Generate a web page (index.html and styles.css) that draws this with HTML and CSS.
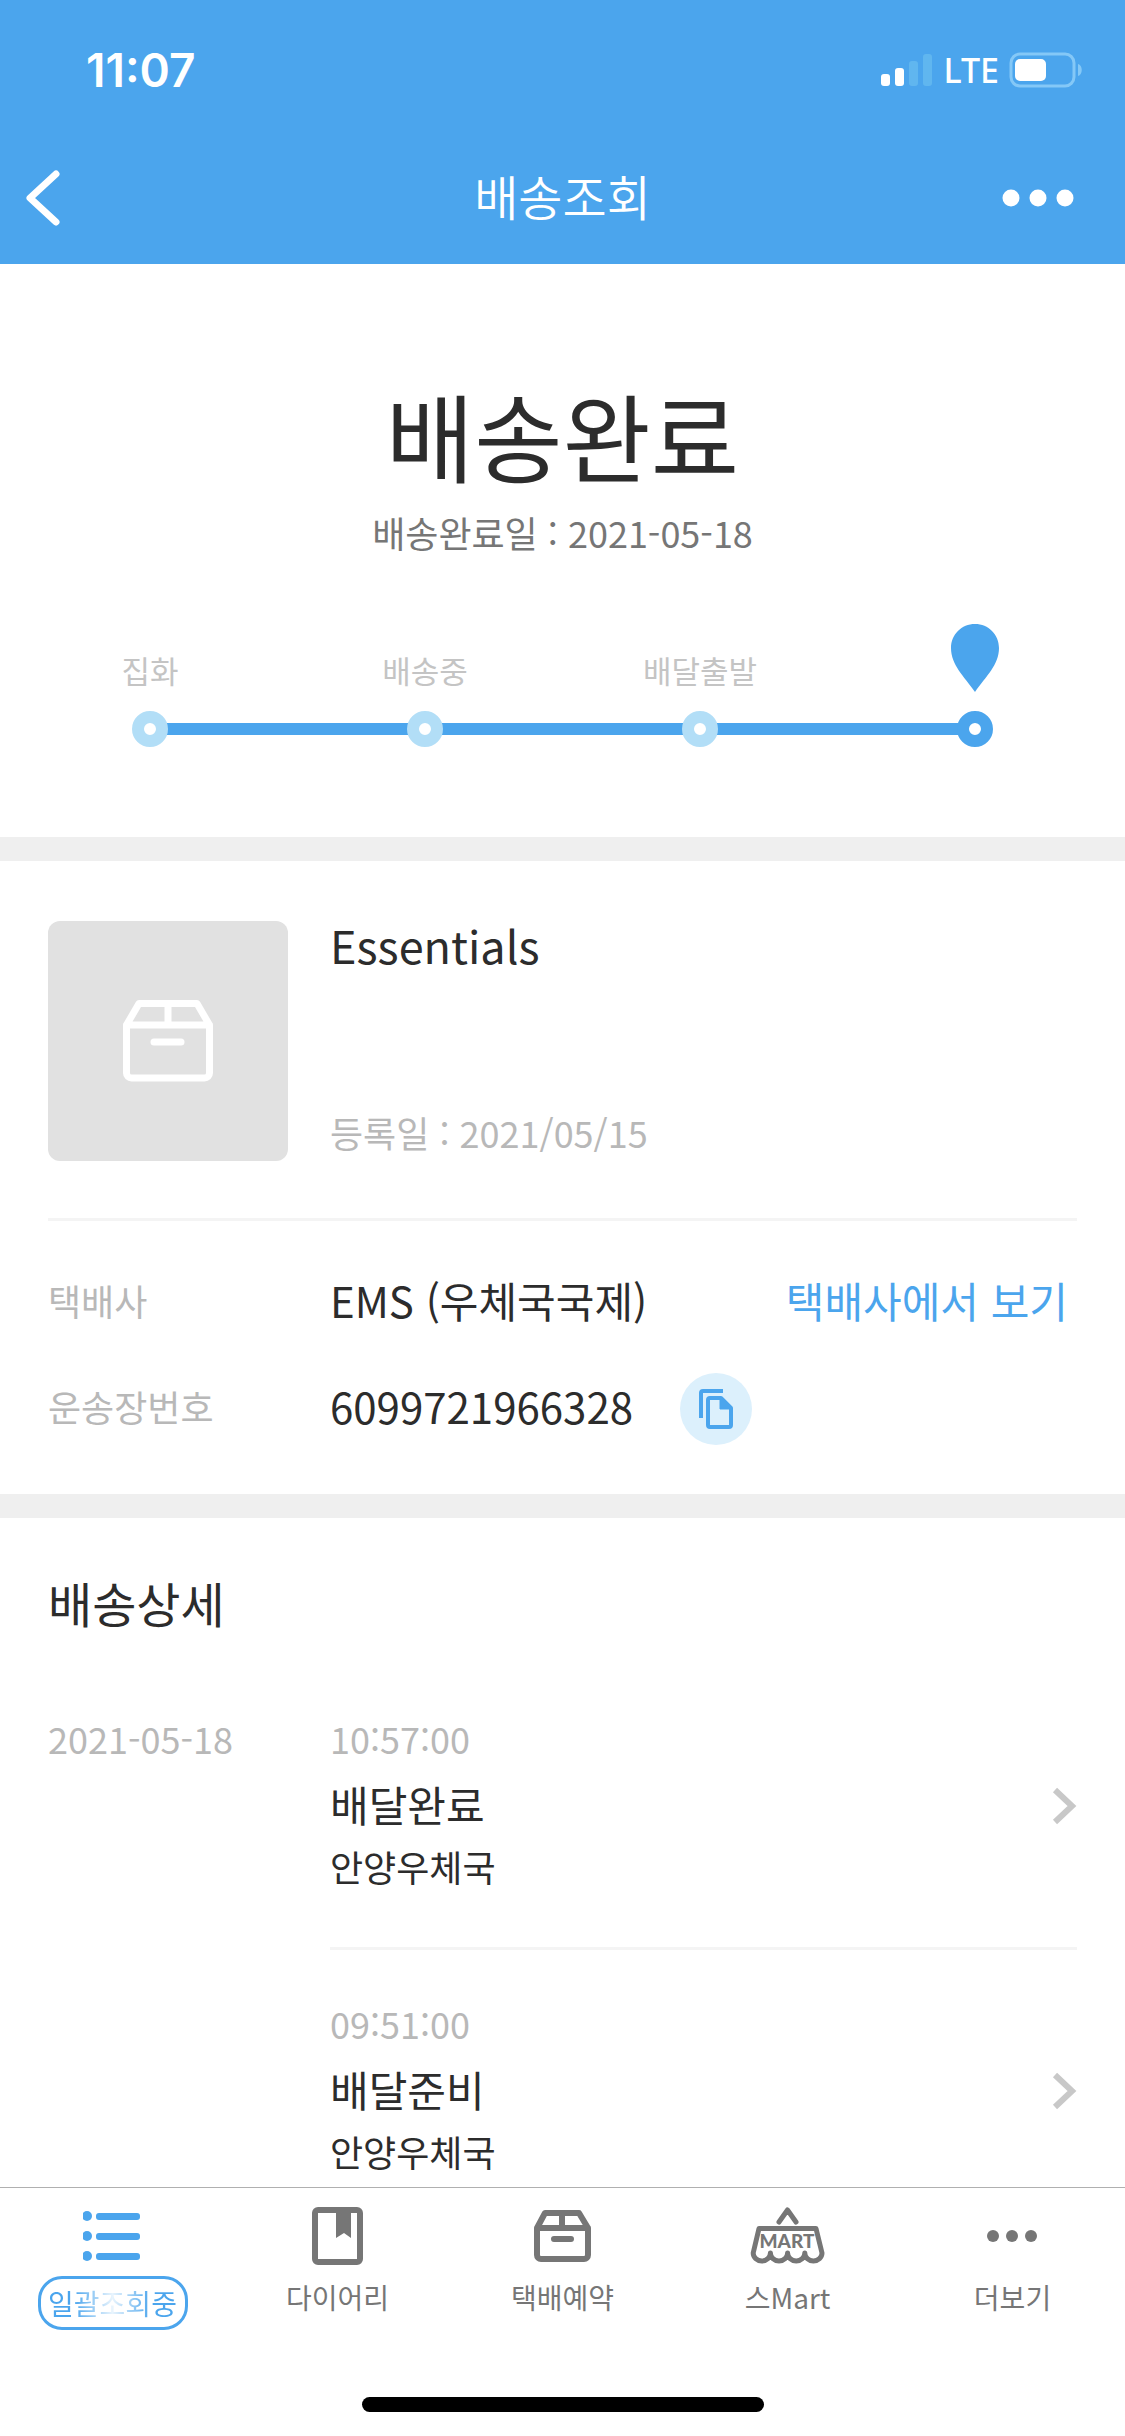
FILE: index.html
```html
<!DOCTYPE html>
<html lang="ko">
<head>
<meta charset="utf-8">
<meta name="viewport" content="width=device-width, initial-scale=1">
<title>배송조회</title>
<link rel="stylesheet" href="styles.css">
</head>
<body>
<div class="app">
  <header class="header">
    <div class="status">
      <span class="clock">11:07</span>
      <div class="indicators">
        <svg width="52" height="33" viewBox="0 0 52 33" fill="#fff" aria-hidden="true">
          <rect x="0" y="20" width="9" height="12" rx="3"/>
          <rect x="14" y="14" width="9" height="18" rx="3"/>
          <rect x="28" y="7" width="9" height="25" rx="3" fill="#60b6ef"/>
          <rect x="42" y="0" width="9" height="32" rx="3" fill="#60b6ef"/>
        </svg>
        <span class="network">LTE</span>
        <svg width="74" height="36" viewBox="0 0 74 36" aria-hidden="true">
          <rect x="2" y="2" width="63" height="32" rx="9" fill="none" stroke="#84c8f7" stroke-width="3"/>
          <rect x="6" y="7" width="31" height="22" rx="5" fill="#fff"/>
          <path d="M69 12c5 1 5 11 0 12z" fill="#84c8f7"/>
        </svg>
      </div>
    </div>
    <div class="navbar">
      <button class="icon-button" type="button" aria-label="뒤로">
        <svg width="36" height="58" viewBox="0 0 36 58" fill="none" stroke="#fff" stroke-width="7" stroke-linecap="round" stroke-linejoin="round" aria-hidden="true"><path d="M30 5 4 29l26 24"/></svg>
      </button>
      <h1 class="nav-title">배송조회</h1>
      <button class="icon-button icon-button-end" type="button" aria-label="메뉴">
        <svg width="72" height="18" viewBox="0 0 72 18" fill="#fff" aria-hidden="true"><circle cx="9" cy="9" r="8.500"/><circle cx="36" cy="9" r="8.500"/><circle cx="63" cy="9" r="8.500"/></svg>
      </button>
    </div>
  </header>

  <main class="content">
    <section class="summary">
      <h2 class="summary-title">배송완료</h2>
      <p class="summary-date">배송완료일 : 2021-05-18</p>
      <ol class="steps">
        <li class="step"><span class="step-label">집화</span><span class="dot"></span></li>
        <li class="step"><span class="step-label">배송중</span><span class="dot"></span></li>
        <li class="step"><span class="step-label">배달출발</span><span class="dot"></span></li>
        <li class="step step-current">
          <svg class="pin" width="48" height="68" viewBox="0 0 48 68" fill="#4ba5ed" role="img" aria-label="배송완료"><path d="M24 0C10.500 0 0 10.500 0 24c0 17 13 28 24 44 11-16 24-27 24-44C48 10.500 37.500 0 24 0z"/></svg>
          <span class="dot"></span>
        </li>
      </ol>
    </section>

    <section class="parcel">
      <div class="product">
        <div class="thumb">
          <svg width="90" height="82" viewBox="0 0 90 82" fill="none" stroke="#fff" stroke-width="7" stroke-linecap="round" stroke-linejoin="round" aria-hidden="true"><path d="M3.500 25 16 3.500h58L86.500 25v48a5 5 0 0 1-5 5h-73a5 5 0 0 1-5-5zM3.500 25h83M45 4v20M31 42h27"/></svg>
        </div>
        <div class="product-text">
          <h2 class="product-name">Essentials</h2>
          <p class="muted">등록일 : 2021/05/15</p>
        </div>
      </div>
      <dl class="facts">
        <div class="fact">
          <dt class="fact-label muted">택배사</dt>
          <dd class="fact-value">EMS (우체국국제)</dd>
          <dd class="fact-link"><a href="#carrier">택배사에서 보기</a></dd>
        </div>
        <div class="fact">
          <dt class="fact-label muted">운송장번호</dt>
          <dd class="fact-value">6099721966328</dd>
          <dd class="fact-copy">
            <button class="copy" type="button" aria-label="복사">
              <svg width="36" height="40" viewBox="0 0 36 40" fill="none" stroke="#4ba5ed" stroke-width="4" stroke-linejoin="round" aria-hidden="true"><path d="M3 29V4q0-2 2-2h20M12 9h11l10 10v17q0 2-2 2H12q-2 0-2-2V11q0-2 2-2z"/><path d="M22 9v11h11z" fill="#4ba5ed" stroke-width="1"/></svg>
            </button>
          </dd>
        </div>
      </dl>
    </section>

    <section class="detail">
      <h2 class="detail-title">배송상세</h2>
      <div class="day">
        <p class="muted">2021-05-18</p>
        <ul class="events">
          <li><a class="event" href="#event-1">
            <span class="event-text"><span class="muted">10:57:00</span><span class="event-name">배달완료</span><span>안양우체국</span></span>
            <svg class="chevron" width="26" height="38" viewBox="0 0 26 38" fill="none" stroke="#c8c8c8" stroke-width="6" aria-hidden="true"><path d="m4 3 17 16L4 35"/></svg>
          </a></li>
          <li><a class="event" href="#event-2">
            <span class="event-text"><span class="muted">09:51:00</span><span class="event-name">배달준비</span><span>안양우체국</span></span>
            <svg class="chevron" width="26" height="38" viewBox="0 0 26 38" fill="none" stroke="#c8c8c8" stroke-width="6" aria-hidden="true"><path d="m4 3 17 16L4 35"/></svg>
          </a></li>
        </ul>
      </div>
    </section>
  </main>

  <footer class="footer">
    <nav class="tabs">
      <a class="tab tab-active" href="#list">
        <svg width="60" height="60" viewBox="0 0 60 60" fill="#4ba5ed" aria-hidden="true"><circle cx="4" cy="9" r="5"/><circle cx="4" cy="29" r="5"/><circle cx="4" cy="49" r="5"/><rect x="13" y="6" width="44" height="7" rx="3"/><rect x="13" y="26" width="44" height="7" rx="3"/><rect x="13" y="46" width="44" height="7" rx="3"/></svg>
        <span class="pill"><span class="pill-text">일괄조회중</span></span>
      </a>
      <a class="tab" href="#diary">
        <svg width="60" height="60" viewBox="0 0 60 60" fill="none" stroke="#767676" stroke-width="6" aria-hidden="true"><rect x="7" y="3" width="45" height="52" rx="3"/><path d="M28 3h15v28l-7-5-8 5z" fill="#767676" stroke="none"/></svg>
        <span>다이어리</span>
      </a>
      <a class="tab" href="#reserve">
        <svg width="60" height="60" viewBox="0 0 60 60" fill="none" stroke="#767676" stroke-width="6" stroke-linecap="round" stroke-linejoin="round" aria-hidden="true"><path d="M4 21 12 6h34l9 15v27a4 4 0 0 1-4 4H8a4 4 0 0 1-4-4zM4 21h51M29 7v13M21 32h17"/></svg>
        <span>택배예약</span>
      </a>
      <a class="tab" href="#mart">
        <svg width="76" height="60" viewBox="0 0 76 60" fill="none" stroke="#767676" stroke-width="5" stroke-linecap="round" stroke-linejoin="round" aria-hidden="true"><path d="m29 15 8.500-12L46 15M9 21.500h57l6 24.500a8.600 8 0 0 1-17.200 0 8.600 8 0 0 1-17.200 0 8.600 8 0 0 1-17.200 0 8.600 8 0 0 1-17.200 0z"/><text class="mart-text" x="37" y="41" text-anchor="middle">MART</text></svg>
        <span>스Mart</span>
      </a>
      <a class="tab" href="#more">
        <svg width="60" height="60" viewBox="0 0 60 60" fill="#767676" aria-hidden="true"><circle cx="10" cy="29" r="6"/><circle cx="29" cy="29" r="6"/><circle cx="48" cy="29" r="6"/></svg>
        <span>더보기</span>
      </a>
    </nav>
    <div class="home-bar"></div>
  </footer>
</div>
</body>
</html>
```

FILE: styles.css
```css
* {
  box-sizing: border-box;
}

body,
h1,
h2,
p,
ol,
ul,
dl,
dd {
  margin: 0;
  padding: 0;
}

body {
  background: #fff;
  color: #2c2c2c;
  font-family: "Noto Sans CJK KR", sans-serif;
  font-size: 36px;
  font-weight: 400;
  line-height: 48px;
}

h1,
h2 {
  font-weight: 400;
}

ol,
ul {
  list-style: none;
}

a {
  color: inherit;
  text-decoration: none;
}

button {
  border: 0;
  padding: 0;
  background: none;
  font: inherit;
}

svg {
  display: block;
  flex: none;
}

.app {
  display: flex;
  flex-direction: column;
  min-height: 100vh;
}

/* Header */

.header {
  background: #4ba5ed;
  color: #fff;
}

.status {
  display: flex;
  align-items: center;
  justify-content: space-between;
  height: 132px;
  padding: 8px 42px 0 86px;
}

.clock {
  font-family: Inter, sans-serif;
  font-size: 46px;
  font-weight: 600;
}

.indicators {
  display: flex;
  align-items: center;
  gap: 10px;
}

.network {
  font-family: "Noto Sans", sans-serif;
  font-size: 34px;
  font-weight: 500;
}

.navbar {
  display: grid;
  grid-template-columns: 1fr auto 1fr;
  align-items: center;
  height: 132px;
  padding: 0 26px;
}

.icon-button-end {
  justify-self: end;
  margin-right: 25px;
}

.nav-title {
  padding-bottom: 6px;
  font-size: 48px;
  font-weight: 350;
}

/* Delivery state */

.summary {
  padding: 110px 126px 90px;
  text-align: center;
}

.summary-title {
  font-size: 96px;
  line-height: 120px;
}

.summary-date {
  margin-top: 14px;
  color: #767676;
}

.steps {
  display: flex;
  justify-content: space-between;
  margin-top: 68px;
  background: linear-gradient(#4ba5ed, #4ba5ed) center bottom 12px / calc(100% - 48px) 12px no-repeat;
}

.step {
  display: flex;
  flex-direction: column;
  align-items: center;
  justify-content: space-between;
  width: 48px;
  height: 123px;
}

.step-label {
  padding-top: 22px;
  color: #c4c4c4;
  font-size: 31px;
  white-space: nowrap;
}

.dot {
  width: 36px;
  height: 36px;
  border: 12px solid #b2def7;
  border-radius: 50%;
  background: #fff;
}

.step-current .dot {
  border-color: #4ba5ed;
}

/* Parcel */

.parcel,
.detail {
  border-top: 24px solid #efefef;
  padding: 0 48px;
}

.product {
  display: flex;
  gap: 42px;
  padding: 60px 0 57px;
  border-bottom: 3px solid #f4f4f4;
}

.thumb {
  display: grid;
  place-items: center;
  width: 240px;
  height: 240px;
  border-radius: 12px;
  background: #e1e1e1;
}

.product-text {
  display: flex;
  flex-direction: column;
  justify-content: space-between;
  padding-bottom: 5px;
}

.product-name {
  font-size: 45px;
  line-height: 48px;
}

.muted {
  color: #b8b8b8;
}

.facts {
  padding: 46px 0 49px;
}

.fact {
  display: grid;
  grid-template-columns: 282px auto 1fr;
  align-items: center;
  height: 72px;
}

.fact + .fact {
  margin-top: 34px;
}

.fact-label,
.fact-value,
.fact-link {
  padding-bottom: 7px;
}

.fact-value,
.fact-link {
  font-size: 42px;
}

.fact-link {
  justify-self: end;
  padding-right: 9px;
  color: #4ba5ed;
}

.fact-copy {
  padding-left: 47px;
}

.copy {
  display: grid;
  place-items: center;
  width: 72px;
  height: 72px;
  border-radius: 50%;
  background: #dcf0fc;
}

/* Tracking history */

.detail {
  flex: 1;
}

.detail-title {
  padding: 60px 0 88px;
  font-size: 48px;
}

.day {
  display: grid;
  grid-template-columns: 282px 1fr;
}

.event {
  display: flex;
  align-items: center;
  justify-content: space-between;
  padding-bottom: 57px;
}

li + li .event {
  padding-top: 49px;
  border-top: 3px solid #f4f4f4;
}

li:last-child .event {
  padding-bottom: 0;
}

.event-text {
  display: flex;
  flex-direction: column;
}

.event-name {
  padding: 8px 0 4px;
  font-size: 42px;
  line-height: 68px;
}

.chevron {
  margin-top: 8px;
}

/* Tab bar */

.footer {
  position: sticky;
  bottom: 0;
  height: 249px;
  margin-top: auto;
  border-top: 1px solid #b0b0b0;
  background: #fff;
}

.tabs {
  display: grid;
  grid-template-columns: repeat(5, 1fr);
  padding-top: 19px;
}

.tab {
  display: flex;
  flex-direction: column;
  align-items: center;
  gap: 9px;
  height: 190px;
  color: #767676;
  font-size: 28px;
  line-height: 42px;
}

.pill {
  width: 150px;
  border: 3px solid #4ba5ed;
  border-radius: 24px;
  line-height: 48px;
  text-align: center;
}

.pill-text {
  background: linear-gradient(90deg, #4ba5ed 20%, #e8f4fd 50%, #4ba5ed 80%);
  background-clip: text;
  color: transparent;
}

.mart-text {
  fill: #767676;
  stroke: none;
  font-family: Lato, sans-serif;
  font-size: 19px;
  font-weight: 900;
}

.home-bar {
  width: 402px;
  height: 15px;
  margin: 0 auto;
  border-radius: 8px;
  background: #000;
}
```
